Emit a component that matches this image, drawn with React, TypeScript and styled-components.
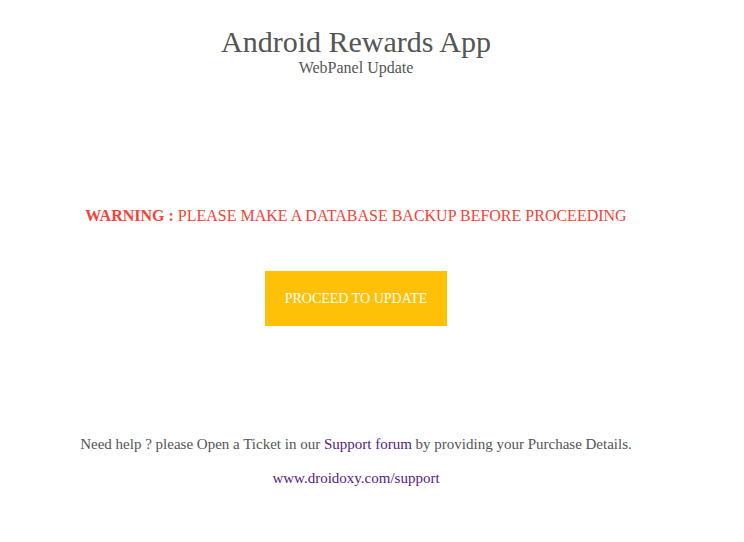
import React from "react";
import styled, { createGlobalStyle } from "styled-components";

const Global = createGlobalStyle`
  html, body { margin: 0; padding: 0; background: #fff; }
  body { font-family: "Liberation Serif", "Times New Roman", serif; color: #555; }
`;

const Page = styled.div`
  width: 696px;
  margin-left: 8px;
  padding-top: 24px;
  display: flex;
  flex-direction: column;
  align-items: center;
  text-align: center;
`;

const Title = styled.h1`
  margin: 0;
  font-size: 30px;
  font-weight: normal;
  line-height: 36px;
  color: #555;
`;

const Subtitle = styled.div`
  font-size: 16px;
  line-height: 16px;
  color: #555;
`;

const Warning = styled.p`
  margin: 130px 0 0;
  font-size: 16px;
  line-height: 20px;
  color: #f44336;
`;

const Strong = styled.b`
  font-weight: bold;
`;

const Button = styled.a`
  margin-top: 45px;
  width: 182px;
  height: 55px;
  display: flex;
  align-items: center;
  justify-content: center;
  background: #ffc107;
  color: #fff;
  font-size: 14px;
  text-decoration: none;
`;

const Help = styled.p`
  margin: 110px 0 0;
  font-size: 15px;
  line-height: 17px;
  color: #555;
`;

const Link = styled.a`
  color: #551a8b;
  text-decoration: none;
`;

const Site = styled.p`
  margin: 17px 0 0;
  font-size: 15px;
  line-height: 17px;
`;

export default function App() {
  return (
    <>
      <Global />
      <Page>
        <Title>Android Rewards App</Title>
        <Subtitle>WebPanel Update</Subtitle>
        <Warning>
          <Strong>WARNING :</Strong> PLEASE MAKE A DATABASE BACKUP BEFORE PROCEEDING
        </Warning>
        <Button href="#">PROCEED TO UPDATE</Button>
        <Help>
          Need help ? please Open a Ticket in our <Link href="#">Support forum</Link> by providing your Purchase Details.
        </Help>
        <Site>
          <Link href="#">www.droidoxy.com/support</Link>
        </Site>
      </Page>
    </>
  );
}
